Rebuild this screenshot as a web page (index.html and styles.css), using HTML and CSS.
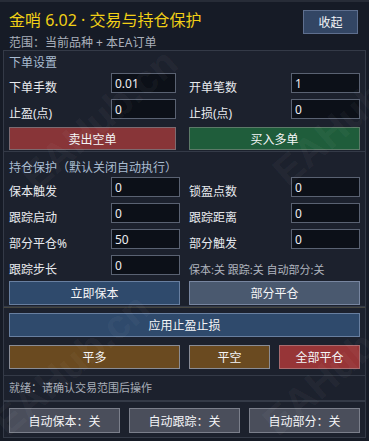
FILE: index.html
```html
<!DOCTYPE html>
<html lang="zh-CN">
<head>
<meta charset="utf-8">
<title>金哨 6.02</title>
<link rel="stylesheet" href="styles.css">
</head>
<body>
<div class="app">
  <header class="header">
    <div class="head-text">
      <div class="title">金哨 6.02 · 交易与持仓保护</div>
      <div class="scope">范围：当前品种 + 本EA订单</div>
    </div>
    <button class="btn btn-collapse">收起</button>
  </header>

  <section class="panel p-order">
    <div class="sec-title">下单设置</div>
    <div class="grid g1">
      <div class="field"><span class="lbl">下单手数</span><input class="inp w65" value="0.01"></div>
      <div class="field"><span class="lbl">开单笔数</span><input class="inp" value="1"></div>
      <div class="field"><span class="lbl">止盈(点)</span><input class="inp w65" value="0"></div>
      <div class="field"><span class="lbl">止损(点)</span><input class="inp" value="0"></div>
      <button class="btn btn-sell mt2">卖出空单</button>
      <button class="btn btn-buy mt2">买入多单</button>
    </div>
  </section>

  <section class="panel p-protect">
    <div class="sec-title">持仓保护（默认关闭自动执行）</div>
    <div class="grid g2">
      <div class="field"><span class="lbl">保本触发</span><input class="inp" value="0"></div>
      <div class="field"><span class="lbl">锁盈点数</span><input class="inp" value="0"></div>
      <div class="field"><span class="lbl">跟踪启动</span><input class="inp" value="0"></div>
      <div class="field"><span class="lbl">跟踪距离</span><input class="inp" value="0"></div>
      <div class="field"><span class="lbl">部分平仓%</span><input class="inp" value="50"></div>
      <div class="field"><span class="lbl">部分触发</span><input class="inp" value="0"></div>
      <div class="field"><span class="lbl">跟踪步长</span><input class="inp" value="0"></div>
      <div class="field"><span class="lbl state">保本:关 跟踪:关 自动部分:关</span></div>
      <button class="btn btn-blue">立即保本</button>
      <button class="btn btn-slate">部分平仓</button>
    </div>
  </section>

  <section class="panel p-actions">
    <button class="btn btn-blue btn-wide">应用止盈止损</button>
    <div class="close-row">
      <button class="btn btn-brown c-long">平多</button>
      <button class="btn btn-brown c-short">平空</button>
      <button class="btn btn-red c-short">全部平仓</button>
    </div>
  </section>

  <section class="panel p-status">
    <div class="status">就绪：请确认交易范围后操作</div>
  </section>

  <section class="panel p-auto">
    <button class="btn btn-gray">自动保本：关</button>
    <button class="btn btn-gray">自动跟踪：关</button>
    <button class="btn btn-gray">自动部分：关</button>
  </section>

  <div class="wm" aria-hidden="true">
    <span class="wm-t wm1">EAHub.cn</span>
    <span class="wm-t wm2">EAHub.cn</span>
    <span class="wm-t wm3">EAHub.cn</span>
    <span class="wm-t wm4">EAHub.cn</span>
  </div>
</div>
</body>
</html>
```

FILE: styles.css
```css
html, body {
  margin: 0;
  padding: 0;
  background: #161b26;
}
body {
  font-family: "Noto Sans", "Noto Sans CJK SC", sans-serif;
  color: #e8eaee;
}
.app {
  position: relative;
  width: 369px;
  height: 441px;
  box-sizing: border-box;
  border-top: 2px solid #272c37;
  overflow: hidden;
}
.header {
  display: flex;
  justify-content: space-between;
  align-items: flex-start;
  padding: 8px 11px 0 9px;
}
.title {
  font-size: 16px;
  line-height: 20px;
  color: #f1d016;
}
.scope {
  margin-top: 6px;
  font-size: 12px;
  line-height: 14px;
  color: #aab0bb;
}
.btn {
  box-sizing: border-box;
  height: 24px;
  margin: 0;
  padding: 0;
  border: 1px solid #6b7385;
  color: #f4f5f7;
  font-family: "Noto Sans", "Noto Sans CJK SC", sans-serif;
  font-size: 12px;
  line-height: normal;
  display: flex;
  align-items: center;
  justify-content: center;
  white-space: nowrap;
}
.btn-collapse {
  width: 55px;
  background: #334664;
  border-color: #5e6f8e;
}
.panel {
  margin: 0 3px;
  border: 1px solid #343a47;
  background: #1c212d;
  padding: 0 5px;
}
.panel + .panel {
  border-top: none;
}
.sec-title {
  font-size: 12px;
  line-height: 16px;
  color: #a9bcd1;
}
.p-order {
  padding-top: 4px;
  padding-bottom: 1px;
}
.p-order .sec-title {
  margin-bottom: 2px;
}
.grid {
  display: grid;
  row-gap: 6px;
}
.g1 {
  grid-template-columns: 167px 171px;
  column-gap: 13px;
}
.g2 {
  grid-template-columns: 171px 171px;
  column-gap: 9px;
}
.field {
  display: flex;
  justify-content: space-between;
  align-items: flex-start;
  height: 20px;
}
.lbl {
  box-sizing: border-box;
  height: 20px;
  padding-top: 7px;
  font-size: 12px;
  line-height: 16px;
  color: #e8eaee;
  white-space: nowrap;
}
.lbl.state {
  font-size: 11px;
  color: #b0b5bf;
}
.inp {
  box-sizing: border-box;
  width: 69px;
  height: 20px;
  margin: 0;
  padding: 0 3px;
  background: #0c1018;
  border: 1px solid #5a6272;
  color: #eceef2;
  font-family: "Noto Sans", "Noto Sans CJK SC", sans-serif;
  font-size: 12px;
  outline: none;
}
.inp.w65 {
  width: 65px;
}
.mt2 {
  margin-top: 2px;
  height: 23px;
}
.btn-sell {
  background: #883538;
  border-color: #7d6a70;
}
.btn-buy {
  background: #1f5d3b;
  border-color: #5c7a68;
}
.p-protect {
  padding-top: 8px;
  padding-bottom: 1px;
}
.p-protect .sec-title {
  margin-bottom: 1px;
}
.btn-blue {
  background: #2f4a6c;
  border-color: #687fa0;
}
.btn-slate {
  background: #4a596f;
  border-color: #7886a0;
}
.p-actions {
  border-top: 1px solid #45453f !important;
  padding-top: 5px;
  padding-bottom: 6px;
}
.btn-wide {
  width: 100%;
}
.close-row {
  display: flex;
  gap: 9px;
  margin-top: 8px;
}
.c-long {
  width: 171px;
}
.c-short {
  width: 81px;
}
.btn-brown {
  background: #6a4a20;
  border-color: #8a8c94;
}
.btn-red {
  background: #973537;
  border-color: #a86b6e;
}
.p-status {
  padding-top: 4px;
  padding-bottom: 4px;
}
.status {
  font-size: 11px;
  line-height: 16px;
  color: #a8aeb8;
}
.p-auto {
  border-top: 1px solid #343a47 !important;
  display: flex;
  gap: 9px;
  padding-top: 6px;
  padding-bottom: 4px;
}
.btn-gray {
  width: 111px;
  height: 25px;
  background: #4a4e5b;
  border-color: #7b7f8b;
}
.wm {
  position: absolute;
  inset: 0;
  pointer-events: none;
}
.wm-t {
  position: absolute;
  font-family: "Liberation Sans", Arial, sans-serif;
  font-weight: bold;
  font-size: 40px;
  line-height: 40px;
  color: rgba(255, 255, 255, 0.05);
  white-space: nowrap;
  transform-origin: 0 100%;
  transform: rotate(-41deg);
}
.wm1 { left: 40px; top: 155px; }
.wm2 { left: 292px; top: 150px; }
.wm3 { left: 12px; top: 400px; }
.wm4 { left: 282px; top: 400px; }
```
